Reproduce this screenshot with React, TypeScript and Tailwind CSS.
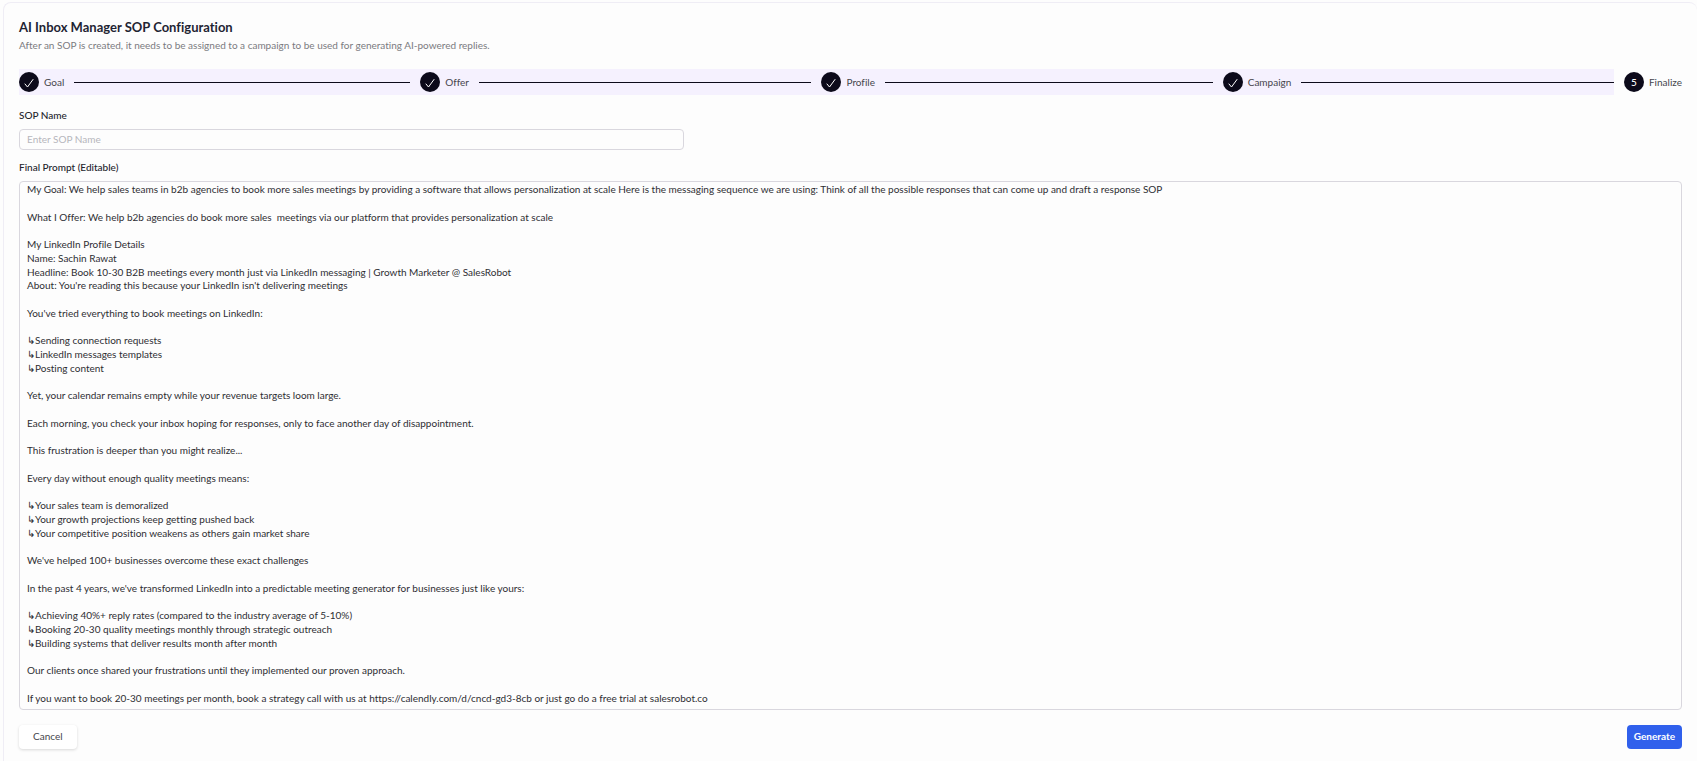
import React from 'react';

interface Step {
    label: string;
}

const completedSteps: Step[] = [
    { label: "Goal" },
    { label: "Offer" },
    { label: "Profile" },
    { label: "Campaign" }
];

const finalPrompt = `My Goal: We help sales teams in b2b agencies to book more sales meetings by providing a software that allows personalization at scale Here is the messaging sequence we are using: Think of all the possible responses that can come up and draft a response SOP

What I Offer: We help b2b agencies do book more sales  meetings via our platform that provides personalization at scale

My LinkedIn Profile Details
Name: Sachin Rawat
Headline: Book 10-30 B2B meetings every month just via LinkedIn messaging | Growth Marketer @ SalesRobot
About: You're reading this because your LinkedIn isn't delivering meetings

You've tried everything to book meetings on LinkedIn:

↳Sending connection requests
↳LinkedIn messages templates
↳Posting content

Yet, your calendar remains empty while your revenue targets loom large.

Each morning, you check your inbox hoping for responses, only to face another day of disappointment.

This frustration is deeper than you might realize...

Every day without enough quality meetings means:

↳Your sales team is demoralized
↳Your growth projections keep getting pushed back
↳Your competitive position weakens as others gain market share

We've helped 100+ businesses overcome these exact challenges

In the past 4 years, we've transformed LinkedIn into a predictable meeting generator for businesses just like yours:

↳Achieving 40%+ reply rates (compared to the industry average of 5-10%)
↳Booking 20-30 quality meetings monthly through strategic outreach
↳Building systems that deliver results month after month

Our clients once shared your frustrations until they implemented our proven approach.

If you want to book 20-30 meetings per month, book a strategy call with us at https://calendly.com/d/cncd-gd3-8cb or just go do a free trial at salesrobot.co`;

const StepCircle: React.FC<{ children: React.ReactNode }> = ({ children }) => (
    <span className="flex size-5 shrink-0 items-center justify-center rounded-full bg-[#0c0a1a] text-[10px] font-medium text-white">
        {children}
    </span>
);

const Stepper: React.FC = () => (
    <div className="mt-[17px] flex items-center gap-[10px] text-[10px] leading-4 text-[#45454c]">
        <ol className="flex h-[26px] flex-1 items-center gap-[10px] bg-[#f5f1fe]">
            {completedSteps.map((step) => (
                <li key={step.label} className="flex flex-1 items-center">
                    <StepCircle>
                        <svg className="size-3" viewBox="0 0 12 12" fill="none" stroke="currentColor" strokeWidth={1}>
                            <path strokeLinecap="round" strokeLinejoin="round" d="M2 8l2.5 3L10 3.5" />
                        </svg>
                    </StepCircle>
                    <span className="ml-[5px]">{step.label}</span>
                    <span className="ml-[10px] flex-1 border-t border-[#0c0a1a]"></span>
                </li>
            ))}
        </ol>
        <div className="flex items-center" aria-current="step">
            <StepCircle>5</StepCircle>
            <span className="ml-[5px]">Finalize</span>
        </div>
    </div>
);

const App: React.FC = () => {
    return (
        <div className="flex min-h-screen flex-col bg-[#fdfdfd] pt-[2px] pl-[3px] font-['Lato',sans-serif] [font-variant-ligatures:none]">
            <main className="flex-1 rounded-t-lg border-t border-l border-[#efedf5] px-[15px] pt-4 pb-2">

                {/* Header */}
                <h1 className="text-[13px] leading-4 font-bold text-[#1f2433]">AI Inbox Manager SOP Configuration</h1>
                <p className="mt-[3px] text-[10px] leading-[14px] text-[#7b7b80]">
                    After an SOP is created, it needs to be assigned to a campaign to be used for generating AI-powered replies.
                </p>

                <Stepper />

                {/* Form */}
                <form onSubmit={(e) => e.preventDefault()}>
                    <label htmlFor="sop-name" className="mt-3 block text-[10px] leading-4 font-medium text-[#24242c]">
                        SOP Name
                    </label>
                    <input
                        id="sop-name"
                        type="text"
                        placeholder="Enter SOP Name"
                        className="mt-[6px] block h-[21px] w-2/5 rounded border border-[#d9d7de] px-[7px] pb-[2px] text-[10px] leading-4 text-[#33333b] outline-none placeholder:text-[#b6b6bc]"
                    />

                    <label htmlFor="final-prompt" className="mt-[9px] block text-[10px] leading-4 font-medium text-[#24242c]">
                        Final Prompt (Editable)
                    </label>
                    <textarea
                        id="final-prompt"
                        rows={38}
                        defaultValue={finalPrompt}
                        className="mt-[6px] block w-full resize-none overflow-hidden rounded border border-[#d9d7de] px-[7px] pt-px pb-[3px] text-[10px] leading-snug text-[#2e2e33] outline-none"
                    />

                    <div className="mt-[15px] flex items-center justify-between">
                        <button type="button" className="h-6 rounded bg-white px-[14px] pb-[2px] text-[10px] leading-4 text-[#45454c] shadow-[0_1px_3px_rgba(0,0,0,0.15)]">
                            Cancel
                        </button>
                        <button type="submit" className="h-6 rounded bg-[#3060ec] px-[7px] pb-[2px] text-[10px] leading-4 font-bold text-white">
                            Generate
                        </button>
                    </div>
                </form>
            </main>
        </div>
    );
};

export default App;
